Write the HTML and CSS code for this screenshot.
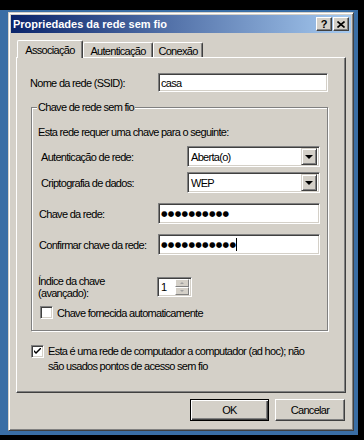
FILE: index.html
```html
<!DOCTYPE html>
<html lang="pt">
<head>
    <meta charset="UTF-8">
    <title>Propriedades da rede sem fio</title>
    <link rel="stylesheet" href="styles.css">
</head>
<body>
    <div class="desktop">
        <div class="window">
            <div class="titlebar">
                <span class="title">Propriedades da rede sem fio</span>
                <div class="caption-buttons">
                    <div class="caption-btn">?</div>
                    <div class="caption-btn">
                        <svg width="8" height="7" viewBox="0 0 8 7"><path d="M0.5 0.5 L7.5 6.5 M7.5 0.5 L0.5 6.5" stroke="#000" stroke-width="1.6"/></svg>
                    </div>
                </div>
            </div>

            <div class="dialog-body">
                <div class="tabs">
                    <div class="tab active">Associação</div>
                    <div class="tab tab-auth">Autenticação</div>
                    <div class="tab tab-conn">Conexão</div>
                </div>

                <div class="panel">
                    <div class="row ssid-row">
                        <span class="ssid-label">Nome da rede (SSID):</span>
                        <div class="textbox ssid-box">casa</div>
                    </div>

                    <div class="group">
                        <div class="group-title">Chave de rede sem fio</div>
                        <div class="note">Esta rede requer uma chave para o seguinte:</div>

                        <div class="row combo-row first">
                            <span class="combo-label">Autenticação de rede:</span>
                            <div class="textbox combo">
                                <span class="combo-text">Aberta(o)</span>
                                <span class="combo-btn"><i class="arrow"></i></span>
                            </div>
                        </div>
                        <div class="row combo-row">
                            <span class="combo-label">Criptografia de dados:</span>
                            <div class="textbox combo">
                                <span class="combo-text">WEP</span>
                                <span class="combo-btn"><i class="arrow"></i></span>
                            </div>
                        </div>

                        <div class="row key-row">
                            <span class="key-label">Chave da rede:</span>
                            <div class="textbox key-box"><span class="dots">●●●●●●●●●●</span></div>
                        </div>
                        <div class="row key-row">
                            <span class="key-label">Confirmar chave da rede:</span>
                            <div class="textbox key-box"><span class="dots">●●●●●●●●●●●</span><span class="caret"></span></div>
                        </div>

                        <div class="row index-row">
                            <span class="key-label index-label">Índice da chave<br>(avançado):</span>
                            <div class="textbox spin">
                                <span class="spin-text">1</span>
                                <span class="spin-btns">
                                    <span class="spin-btn"><i class="spin-up"></i></span>
                                    <span class="spin-btn"><i class="spin-down"></i></span>
                                </span>
                            </div>
                        </div>

                        <div class="row check-row">
                            <span class="checkbox"></span>
                            <span class="check-label">Chave fornecida automaticamente</span>
                        </div>
                    </div>

                    <div class="adhoc">
                        <span class="checkbox">
                            <svg width="7" height="7" viewBox="0 0 7 7"><path d="M0 2 L2 4 L7 -1 L7 1 L2 6 L0 4 Z" fill="#000"/></svg>
                        </span>
                        <span class="adhoc-text">Esta é uma rede de computador a computador (ad hoc); não<br>são usados pontos de acesso sem fio</span>
                    </div>
                </div>

                <div class="buttons">
                    <div class="btn default">OK</div>
                    <div class="btn cancel">Cancelar</div>
                </div>
            </div>
        </div>
    </div>
</body>
</html>
```

FILE: styles.css
```css
body {
    margin: 0;
    background: #000;
    font-family: 'Liberation Sans', Arial, sans-serif;
    font-size: 11px;
    letter-spacing: -0.7px;
    color: #000;
}
.desktop {
    width: 358px;
    height: 425px;
    margin-top: 10px;
    padding: 2px 4px 4px 8px;
    box-sizing: border-box;
    background: #3a6ea5;
}
.window {
    height: 100%;
    box-sizing: border-box;
    padding: 2px;
    background: #d4d0c8;
    border: 1px solid;
    border-color: #d4d0c8 #404040 #404040 #d4d0c8;
    box-shadow: inset 1px 1px #fff, inset -1px -1px #808080;
}
.titlebar {
    height: 18px;
    display: flex;
    align-items: center;
    justify-content: space-between;
    padding: 0 2px;
    background: linear-gradient(to right, #0a246a, #a6caf0);
}
.title {
    color: #fff;
    font-weight: bold;
    letter-spacing: 0;
}
.caption-buttons {
    display: flex;
    gap: 1px;
}
.caption-btn {
    width: 16px;
    height: 14px;
    box-sizing: border-box;
    display: flex;
    align-items: center;
    justify-content: center;
    font-weight: bold;
    font-size: 11px;
    letter-spacing: 0;
    background: #d4d0c8;
    border: 1px solid;
    border-color: #fff #404040 #404040 #fff;
    box-shadow: inset -1px -1px #808080;
}

.dialog-body {
    padding: 7px 5px 0;
}
.tabs {
    display: flex;
    height: 17px;
    align-items: flex-end;
    padding-left: 1px;
    position: relative;
    z-index: 1;
}
.tab {
    height: 15px;
    box-sizing: border-box;
    display: flex;
    align-items: center;
    justify-content: center;
    padding-top: 1px;
    background: #d4d0c8;
    border: 1px solid #fff;
    border-right-color: #404040;
    border-bottom: none;
    border-radius: 2px 2px 0 0;
    box-shadow: inset -1px 0 #808080;
}
.tab.active {
    width: 66px;
    height: 18px;
    margin-bottom: -1px;
    padding-bottom: 1px;
}
.tab-auth {
    width: 70px;
}
.tab-conn {
    width: 50px;
}

.panel {
    height: 336px;
    box-sizing: border-box;
    padding-top: 15px;
    border: 1px solid;
    border-color: #fff #404040 #404040 #fff;
    box-shadow: inset -1px -1px #808080;
}
.row {
    display: flex;
    align-items: center;
    white-space: nowrap;
}
.textbox {
    box-sizing: border-box;
    display: flex;
    align-items: center;
    background: #fff;
    border: 1px solid;
    border-color: #808080 #fff #fff #808080;
    box-shadow: inset 1px 1px #404040, inset -1px -1px #d4d0c8;
}
.ssid-row {
    height: 19px;
    padding-left: 13px;
}
.ssid-label {
    width: 128px;
}
.ssid-box {
    width: 170px;
    height: 19px;
    padding-left: 2px;
}

.group {
    width: 297px;
    height: 224px;
    box-sizing: border-box;
    margin: 15px 0 0 14px;
    padding-left: 6px;
    border: 1px solid #808080;
    box-shadow: inset 1px 1px #fff, 1px 1px #fff;
}
.group-title {
    width: fit-content;
    margin: -8px 0 0 -1px;
    padding: 0 1px;
    line-height: 14px;
    background: #d4d0c8;
}
.note {
    margin-top: 11px;
    line-height: 14px;
}
.combo-row {
    height: 21px;
    margin-top: 5px;
    padding-left: 3px;
}
.combo-row.first {
    margin-top: 7px;
}
.combo-label {
    width: 146px;
}
.combo {
    width: 133px;
    height: 21px;
    padding: 0 2px 0 3px;
    justify-content: space-between;
}
.combo-btn {
    width: 16px;
    height: 17px;
    box-sizing: border-box;
    display: flex;
    align-items: center;
    justify-content: center;
    background: #d4d0c8;
    border: 1px solid;
    border-color: #d4d0c8 #404040 #404040 #d4d0c8;
    box-shadow: inset 1px 1px #fff, inset -1px -1px #808080;
}
.arrow {
    width: 0;
    height: 0;
    border-left: 4px solid transparent;
    border-right: 4px solid transparent;
    border-top: 4px solid #000;
}
.key-row {
    height: 21px;
    margin-top: 10px;
    padding-left: 1px;
}
.key-label {
    width: 119px;
}
.key-box {
    width: 162px;
    height: 21px;
    padding-left: 2px;
}
.dots {
    font-family: 'DejaVu Sans', sans-serif;
    font-size: 7.5px;
    letter-spacing: 0.3px;
}
.caret {
    width: 1px;
    height: 13px;
    background: #000;
}
.index-row {
    height: 24px;
    margin-top: 20px;
    align-items: flex-start;
}
.index-label {
    line-height: 12px;
}
.spin {
    width: 35px;
    height: 20px;
    margin-top: 2px;
    padding: 2px;
    justify-content: space-between;
}
.spin-text {
    padding-left: 1px;
}
.spin-btns {
    display: flex;
    flex-direction: column;
    height: 16px;
}
.spin-btn {
    width: 14px;
    height: 8px;
    box-sizing: border-box;
    display: flex;
    align-items: center;
    justify-content: center;
    background: #d4d0c8;
    border: 1px solid;
    border-color: #fff #808080 #808080 #fff;
}
.spin-up, .spin-down {
    width: 0;
    height: 0;
    border-left: 2px solid transparent;
    border-right: 2px solid transparent;
}
.spin-up {
    border-bottom: 2px solid #a0a0a0;
}
.spin-down {
    border-top: 2px solid #a0a0a0;
}
.check-row {
    height: 15px;
    margin-top: 6px;
    padding-left: 2px;
}
.checkbox {
    width: 13px;
    height: 13px;
    box-sizing: border-box;
    flex: none;
    display: flex;
    align-items: center;
    justify-content: center;
    background: #fff;
    border: 1px solid;
    border-color: #808080 #fff #fff #808080;
    box-shadow: inset 1px 1px #404040, inset -1px -1px #d4d0c8;
}
.check-label {
    margin-left: 4px;
}
.adhoc {
    display: flex;
    align-items: flex-start;
    margin: 13px 0 0 14px;
}
.adhoc .checkbox {
    margin-top: 1px;
}
.adhoc-text {
    margin-left: 4px;
    line-height: 15px;
}

.buttons {
    display: flex;
    justify-content: flex-end;
    gap: 6px;
    margin-top: 6px;
    padding-right: 1px;
}
.btn {
    height: 22px;
    box-sizing: border-box;
    display: flex;
    align-items: center;
    justify-content: center;
    background: #d4d0c8;
    border: 1px solid;
    border-color: #fff #404040 #404040 #fff;
    box-shadow: inset -1px -1px #808080;
}
.btn.default {
    width: 79px;
    border-color: #000;
    box-shadow: inset 1px 1px #fff, inset -1px -1px #404040, inset -2px -2px #808080;
}
.btn.cancel {
    width: 70px;
}
```
